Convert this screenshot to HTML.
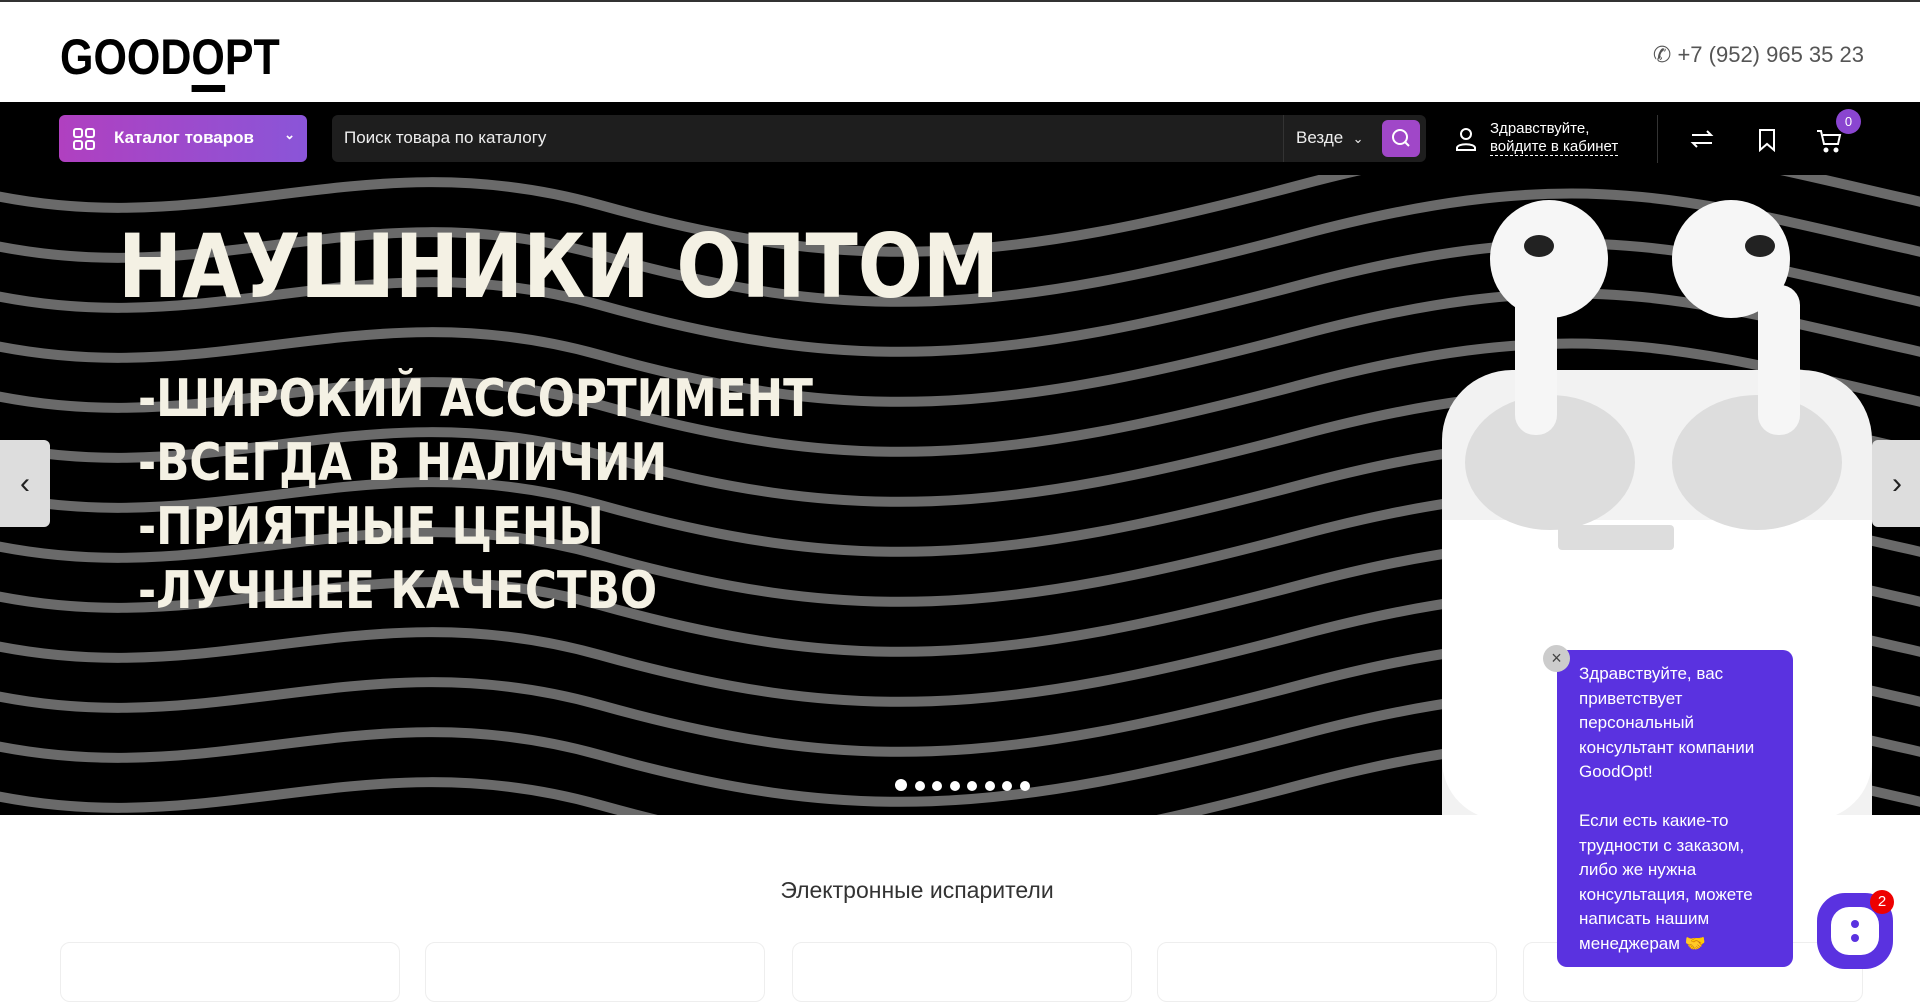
<!DOCTYPE html>
<html><head><meta charset="utf-8"><style>
*{margin:0;padding:0;box-sizing:border-box}
body{width:1920px;height:970px;overflow:hidden;background:#fff;font-family:"Liberation Sans","Noto Sans CJK SC",sans-serif;position:relative}
.top{position:absolute;left:0;top:0;width:1920px;height:102px;background:#fff;border-top:2px solid #333}
.logo{position:absolute;left:60px;top:26px;font-weight:900;font-size:50px;letter-spacing:0px;color:#000;transform:scaleX(.86);transform-origin:left}
.logo u{text-decoration:none;border-bottom:7px solid #000;}
.phone{position:absolute;right:56px;top:40px;font-size:22px;color:#555}
.nav{position:absolute;left:0;top:102px;width:1920px;height:73px;background:#000}
.cat{position:absolute;left:59px;top:13px;width:248px;height:47px;border-radius:6px;background:linear-gradient(90deg,#b040c0,#8a55d8);color:#fff;font-size:17px;font-weight:bold;padding:13px 0 0 55px}
.search{position:absolute;left:332px;top:13px;width:1094px;height:47px;border-radius:6px;background:#1e1e1e;color:#eee;font-size:17px;padding:13px 12px}
.vez{position:absolute;left:951px;top:0;height:47px;border-left:1px solid #333;padding:13px 12px;color:#eee;white-space:nowrap}
.sbtn{position:absolute;right:6px;top:5px;width:38px;height:37px;border-radius:6px;background:#a047c8}
.user{position:absolute;left:1490px;top:18px;color:#fff;font-size:15px;line-height:18px}
.user span{border-bottom:1px dashed #fff}
.banner{position:absolute;left:0;top:175px;width:1920px;height:640px;background:#000;overflow:hidden}
.h{position:absolute;color:#f4f1e4;font-weight:900;font-family:"DejaVu Sans",sans-serif;white-space:nowrap;transform-origin:left top}
.arr{position:absolute;top:440px;width:50px;height:87px;background:#ddd;border-radius:6px;color:#222;font-size:30px;text-align:center;line-height:87px}
.dots{position:absolute;left:895px;top:778px}
.dots i{display:inline-block;width:10px;height:10px;border-radius:50%;background:#fff;margin-right:7.5px}
.title{position:absolute;left:0;width:1834px;text-align:center;top:877px;font-size:23px;color:#333}
.card{position:absolute;top:942px;width:340px;height:60px;border:1px solid #eee;border-radius:10px;background:#fff}
.chat{position:absolute;left:1557px;top:650px;width:236px;height:317px;background:#5a32e0;border-radius:10px;color:#fff;font-size:17px;line-height:24.5px;padding:12px 20px 0 22px}
.x{position:absolute;left:1543px;top:645px;width:27px;height:27px;border-radius:50%;background:#ccc;color:#444;text-align:center;line-height:27px;font-size:18px}
.cb{position:absolute;left:1817px;top:893px;width:76px;height:76px;border-radius:28px;background:#5a32e0}
.cb div{position:absolute;left:14px;top:14px;width:48px;height:48px;border-radius:18px;background:#fff}
.badge{position:absolute;left:1870px;top:890px;width:24px;height:24px;border-radius:50%;background:#e00;color:#fff;font-size:15px;text-align:center;line-height:24px}
</style></head><body>
<div class="top"><div class="logo">GOOD<u>O</u>PT</div><div class="phone">✆ +7 (952) 965 35 23</div></div>
<div class="nav">
<div class="cat"><svg style="position:absolute;left:13px;top:12px" width="24" height="24" fill="none" stroke="#fff" stroke-width="2"><rect x="2" y="2" width="8" height="8" rx="2"/><rect x="14" y="2" width="8" height="8" rx="2"/><rect x="2" y="14" width="8" height="8" rx="2"/><rect x="14" y="14" width="8" height="8" rx="2"/></svg>Каталог товаров<span style="position:absolute;right:12px;top:12px;font-size:13px">⌄</span></div>
<div class="search">Поиск товара по каталогу<div class="vez">Везде &nbsp;<span style="font-size:13px">⌄</span></div><div class="sbtn"><svg width="38" height="37" fill="none" stroke="#fff" stroke-width="2"><circle cx="18" cy="17" r="7"/><path d="M23 22l4 4"/></svg></div></div>
<svg style="position:absolute;left:1454px;top:24px" width="24" height="26" fill="none" stroke="#fff" stroke-width="2"><circle cx="12" cy="8" r="5"/><path d="M3 22c0-5 18-5 18 0v2H3z"/></svg>
<div class="user">Здравствуйте,<br><span>войдите в кабинет</span></div>
<div style="position:absolute;left:1657px;top:13px;width:1px;height:48px;background:#333"></div>
<svg style="position:absolute;left:1690px;top:26px" width="24" height="22" fill="none" stroke="#fff" stroke-width="2"><path d="M2 7h19l-4-4M22 15H3l4 4"/></svg>
<svg style="position:absolute;left:1757px;top:26px" width="20" height="24" fill="none" stroke="#fff" stroke-width="2"><path d="M3 2h14v20l-7-6-7 6z"/></svg>
<svg style="position:absolute;left:1815px;top:26px" width="28" height="26" fill="none" stroke="#fff" stroke-width="2"><path d="M2 3h4l3 13h14l2-9H8"/><circle cx="11" cy="22" r="1.5" fill="#fff"/><circle cx="21" cy="22" r="1.5" fill="#fff"/></svg>
<div style="position:absolute;left:1836px;top:7px;width:25px;height:25px;border-radius:50%;background:#8a45d0;color:#fff;font-size:13px;text-align:center;line-height:25px">0</div>
</div>
<div class="banner">
<svg width="1920" height="640" style="position:absolute;left:0;top:0" fill="none" stroke="#6a6a6a" stroke-width="10">
<path d="M-50 10 C200 80 350 -40 600 30 S1000 90 1300 10 S1700 -20 1980 40"/>
<path d="M-50 60 C200 130 350 10 600 80 S1000 140 1300 60 S1700 30 1980 90"/>
<path d="M-50 110 C200 180 350 60 600 130 S1000 190 1300 110 S1700 80 1980 140"/>
<path d="M-50 160 C200 230 350 110 600 180 S1000 240 1300 160 S1700 130 1980 190"/>
<path d="M-50 210 C200 280 350 160 600 230 S1000 290 1300 210 S1700 180 1980 240"/>
<path d="M-50 260 C200 330 350 210 600 280 S1000 340 1300 260 S1700 230 1980 290"/>
<path d="M-50 310 C200 380 350 260 600 330 S1000 390 1300 310 S1700 280 1980 340"/>
<path d="M-50 360 C200 430 350 310 600 380 S1000 440 1300 360 S1700 330 1980 390"/>
<path d="M-50 410 C200 480 350 360 600 430 S1000 490 1300 410 S1700 380 1980 440"/>
<path d="M-50 460 C200 530 350 410 600 480 S1000 540 1300 460 S1700 430 1980 490"/>
<path d="M-50 510 C200 580 350 460 600 530 S1000 590 1300 510 S1700 480 1980 540"/>
<path d="M-50 560 C200 630 350 510 600 580 S1000 640 1300 560 S1700 530 1980 590"/>
<path d="M-50 610 C200 680 350 560 600 630 S1000 690 1300 610 S1700 580 1980 640"/>
</svg>
<div class="h" style="left:118px;top:40px;font-size:88px;transform:scaleX(.87)">НАУШНИКИ ОПТОМ</div>
<div class="h" style="left:138px;top:192px;font-size:52px;line-height:64px;transform:scaleX(.84)">-ШИРОКИЙ АССОРТИМЕНТ<br>-ВСЕГДА В НАЛИЧИИ<br>-ПРИЯТНЫЕ ЦЕНЫ<br>-ЛУЧШЕЕ КАЧЕСТВО</div>
<div style="position:absolute;left:1442px;top:195px;width:430px;height:445px;background:#f2f2f2;border-radius:70px 70px 0 0"></div>
<div style="position:absolute;left:1442px;top:345px;width:430px;height:300px;background:#fff;border-radius:0 0 60px 60px"></div>
<div style="position:absolute;left:1465px;top:220px;width:170px;height:135px;background:#ddd;border-radius:50%"></div>
<div style="position:absolute;left:1672px;top:220px;width:170px;height:135px;background:#ddd;border-radius:50%"></div>
<div style="position:absolute;left:1558px;top:350px;width:116px;height:25px;background:#ddd;border-radius:4px"></div>
<div style="position:absolute;left:1490px;top:25px;width:118px;height:118px;background:#f6f6f6;border-radius:50%"></div>
<div style="position:absolute;left:1515px;top:110px;width:42px;height:150px;background:#f6f6f6;border-radius:20px"></div>
<div style="position:absolute;left:1672px;top:25px;width:118px;height:118px;background:#f6f6f6;border-radius:50%"></div>
<div style="position:absolute;left:1758px;top:110px;width:42px;height:150px;background:#f6f6f6;border-radius:20px"></div>
<div style="position:absolute;left:1524px;top:60px;width:30px;height:22px;background:#222;border-radius:50%"></div>
<div style="position:absolute;left:1745px;top:60px;width:30px;height:22px;background:#222;border-radius:50%"></div>
</div>
<div class="arr" style="left:0;border-radius:0 6px 6px 0">‹</div>
<div class="arr" style="left:1872px;border-radius:6px 0 0 6px">›</div>
<div class="dots"><i style="width:12px;height:12px"></i><i></i><i></i><i></i><i></i><i></i><i></i><i></i></div>
<div class="title">Электронные испарители</div>
<div class="card" style="left:60px"></div><div class="card" style="left:425px"></div><div class="card" style="left:792px"></div><div class="card" style="left:1157px"></div><div class="card" style="left:1523px"></div>
<div class="chat">Здравствуйте, вас приветствует персональный консультант компании GoodOpt!<br><br>Если есть какие-то трудности с заказом, либо же нужна консультация, можете написать нашим менеджерам 🤝</div>
<div class="x">×</div>
<div class="cb"><div><i style="position:absolute;left:20px;top:13px;width:8px;height:8px;border-radius:50%;background:#5a32e0"></i><i style="position:absolute;left:20px;top:27px;width:8px;height:8px;border-radius:50%;background:#5a32e0"></i></div></div>
<div class="badge">2</div>
</body></html>
